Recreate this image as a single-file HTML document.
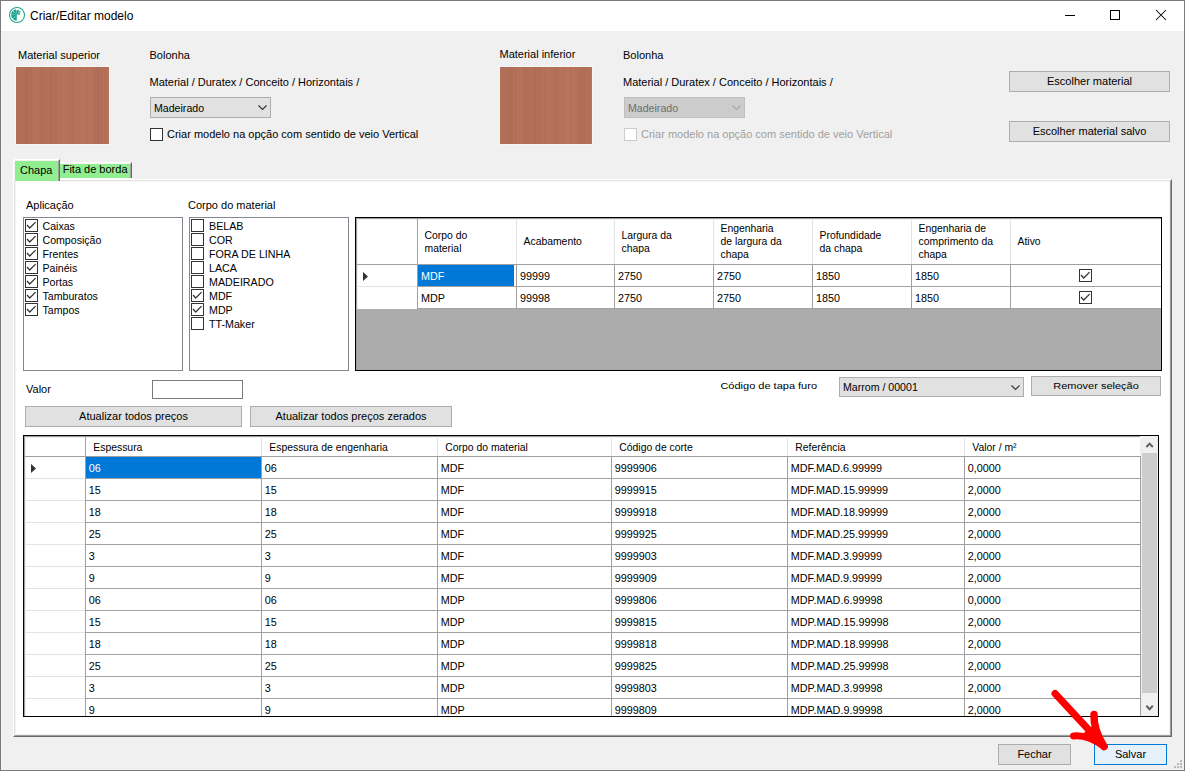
<!DOCTYPE html><html><head><meta charset="utf-8"><style>
html,body{margin:0;padding:0}
body{width:1185px;height:771px;overflow:hidden;position:relative;background:#f0f0f0;font-family:"Liberation Sans",sans-serif}
div,span,svg{position:absolute}
.t{white-space:pre}
</style></head><body>
<div style="left:0px;top:0px;width:1185px;height:771px;box-sizing:border-box;border:1px solid #7a7a7a"></div>
<div style="left:1px;top:1px;width:1183px;height:30px;background:#fff"></div>
<svg style="left:8px;top:6px" width="18" height="18" viewBox="0 0 18 18">
<circle cx="9" cy="9" r="7.5" fill="none" stroke="#1aa58e" stroke-width="1.05"/>
<path d="M8.9 8.8 L8.69 14.80 A6.0 6.0 0 0 1 4.89 13.26 Z M8.9 8.8 L4.62 12.79 A5.85 5.85 0 0 1 3.06 9.11 Z M8.9 8.8 L3.05 8.60 A5.85 5.85 0 0 1 4.48 4.96 Z M8.9 8.8 L5.01 4.77 A5.6 5.6 0 0 1 8.02 3.27 Z M8.9 8.8 L8.64 3.91 A4.9 4.9 0 0 1 11.28 4.51 Z M8.9 8.8 L11.65 4.87 A4.8 4.8 0 0 1 12.68 5.84 Z M8.9 8.8 L11.70 7.05 A3.3 3.3 0 0 1 12.18 8.40 Z" fill="#1aa58e"/>
</svg>
<span class="t" style="left:30px;top:10.24px;font-size:12px;line-height:12px;color:#000;">Criar/Editar modelo</span>
<div style="left:1065px;top:15px;width:10px;height:1px;background:#000"></div>
<div style="left:1110px;top:10px;width:10px;height:10px;box-sizing:border-box;border:1px solid #000"></div>
<svg style="left:1155px;top:9px" width="12" height="12"><path d="M1 1 L11 11 M11 1 L1 11" stroke="#000" stroke-width="1.05"/></svg>
<span class="t" style="left:18px;top:49.69px;font-size:11px;line-height:11px;color:#000;">Material superior</span>
<div style="left:16px;top:67px;width:93px;height:77px;background-color:#b4715a;background-image:linear-gradient(90deg,rgb(179,112,89) 0px 1px,rgb(177,110,88) 1px 2px,rgb(179,112,89) 2px 3px,rgb(176,110,88) 3px 4px,rgb(178,112,89) 4px 5px,rgb(178,111,89) 5px 6px,rgb(176,110,87) 6px 7px,rgb(177,111,88) 7px 8px,rgb(175,109,87) 8px 9px,rgb(177,110,88) 9px 10px,rgb(175,109,86) 10px 11px,rgb(174,108,86) 11px 12px,rgb(176,110,87) 12px 13px,rgb(180,113,90) 13px 14px,rgb(177,111,88) 14px 15px,rgb(176,110,88) 15px 16px,rgb(179,112,89) 16px 17px,rgb(182,115,92) 17px 18px,rgb(182,115,91) 18px 19px,rgb(180,113,90) 19px 20px,rgb(184,116,93) 20px 21px,rgb(179,112,89) 21px 22px,rgb(182,115,91) 22px 23px,rgb(180,113,90) 23px 24px,rgb(177,111,88) 24px 25px,rgb(176,110,87) 25px 26px,rgb(176,110,87) 26px 27px,rgb(180,113,90) 27px 28px,rgb(178,111,88) 28px 29px,rgb(179,112,89) 29px 30px,rgb(180,113,90) 30px 31px,rgb(179,113,90) 31px 32px,rgb(180,113,90) 32px 33px,rgb(177,111,88) 33px 34px,rgb(175,109,87) 34px 35px,rgb(175,109,86) 35px 36px,rgb(178,112,89) 36px 37px,rgb(178,112,89) 37px 38px,rgb(178,111,88) 38px 39px,rgb(179,112,89) 39px 40px,rgb(179,112,89) 40px 41px,rgb(178,112,89) 41px 42px,rgb(181,114,91) 42px 43px,rgb(182,115,91) 43px 44px,rgb(179,113,90) 44px 45px,rgb(180,113,90) 45px 46px,rgb(180,113,90) 46px 47px,rgb(183,115,92) 47px 48px,rgb(183,116,92) 48px 49px,rgb(180,113,90) 49px 50px,rgb(184,116,93) 50px 51px,rgb(180,113,90) 51px 52px,rgb(179,112,89) 52px 53px,rgb(181,114,91) 53px 54px,rgb(178,112,89) 54px 55px,rgb(179,112,89) 55px 56px,rgb(176,110,87) 56px 57px,rgb(179,112,89) 57px 58px,rgb(181,114,91) 58px 59px,rgb(181,114,91) 59px 60px,rgb(183,116,92) 60px 61px,rgb(181,114,90) 61px 62px,rgb(182,114,91) 62px 63px,rgb(182,114,91) 63px 64px,rgb(182,114,91) 64px 65px,rgb(181,114,90) 65px 66px,rgb(183,115,92) 66px 67px,rgb(185,117,93) 67px 68px,rgb(183,115,92) 68px 69px,rgb(183,115,92) 69px 70px,rgb(179,112,89) 70px 71px,rgb(181,113,90) 71px 72px,rgb(181,114,91) 72px 73px,rgb(184,116,93) 73px 74px,rgb(185,117,93) 74px 75px,rgb(181,114,91) 75px 76px,rgb(180,113,90) 76px 77px,rgb(181,114,91) 77px 78px,rgb(177,111,88) 78px 79px,rgb(178,112,89) 79px 80px,rgb(177,110,88) 80px 81px,rgb(175,109,87) 81px 82px,rgb(174,108,86) 82px 83px,rgb(178,112,89) 83px 84px,rgb(176,110,87) 84px 85px,rgb(176,110,87) 85px 86px,rgb(177,111,88) 86px 87px,rgb(181,114,91) 87px 88px,rgb(178,111,88) 88px 89px,rgb(178,112,89) 89px 90px,rgb(179,112,89) 90px 91px,rgb(182,115,92) 91px 92px,rgb(184,116,92) 92px 93px);box-shadow:0 0 0 1px #f4f7f9"></div>
<span class="t" style="left:149.5px;top:49.79px;font-size:11px;line-height:11px;color:#000;">Bolonha</span>
<span class="t" style="left:149.5px;top:77.09px;font-size:11px;line-height:11px;color:#000;">Material / Duratex / Conceito / Horizontais /</span>
<div style="left:150px;top:97px;width:121px;height:21px;box-sizing:border-box;border:1px solid #adadad;background:#e1e1e1"></div>
<span class="t" style="left:154px;top:102.93px;font-size:10.6px;line-height:10.6px;color:#000;">Madeirado</span>
<svg style="left:257.5px;top:105px" width="10" height="6"><path d="M0.5 0.5 L4.5 4.5 L8.5 0.5" stroke="#333" stroke-width="1.15" fill="none"/></svg>
<div style="left:150px;top:128px;width:13px;height:13px;box-sizing:border-box;border:1px solid #333;background:#fff"></div>
<span class="t" style="left:167px;top:128.69px;font-size:11px;line-height:11px;color:#000;">Criar modelo na opção com sentido de veio Vertical</span>
<span class="t" style="left:499.5px;top:49.09px;font-size:11px;line-height:11px;color:#000;">Material inferior</span>
<div style="left:500px;top:67px;width:92px;height:77px;background-color:#b4715a;background-image:linear-gradient(90deg,rgb(179,112,89) 0px 1px,rgb(177,110,88) 1px 2px,rgb(179,112,89) 2px 3px,rgb(176,110,88) 3px 4px,rgb(178,112,89) 4px 5px,rgb(178,111,89) 5px 6px,rgb(176,110,87) 6px 7px,rgb(177,111,88) 7px 8px,rgb(175,109,87) 8px 9px,rgb(177,110,88) 9px 10px,rgb(175,109,86) 10px 11px,rgb(174,108,86) 11px 12px,rgb(176,110,87) 12px 13px,rgb(180,113,90) 13px 14px,rgb(177,111,88) 14px 15px,rgb(176,110,88) 15px 16px,rgb(179,112,89) 16px 17px,rgb(182,115,92) 17px 18px,rgb(182,115,91) 18px 19px,rgb(180,113,90) 19px 20px,rgb(184,116,93) 20px 21px,rgb(179,112,89) 21px 22px,rgb(182,115,91) 22px 23px,rgb(180,113,90) 23px 24px,rgb(177,111,88) 24px 25px,rgb(176,110,87) 25px 26px,rgb(176,110,87) 26px 27px,rgb(180,113,90) 27px 28px,rgb(178,111,88) 28px 29px,rgb(179,112,89) 29px 30px,rgb(180,113,90) 30px 31px,rgb(179,113,90) 31px 32px,rgb(180,113,90) 32px 33px,rgb(177,111,88) 33px 34px,rgb(175,109,87) 34px 35px,rgb(175,109,86) 35px 36px,rgb(178,112,89) 36px 37px,rgb(178,112,89) 37px 38px,rgb(178,111,88) 38px 39px,rgb(179,112,89) 39px 40px,rgb(179,112,89) 40px 41px,rgb(178,112,89) 41px 42px,rgb(181,114,91) 42px 43px,rgb(182,115,91) 43px 44px,rgb(179,113,90) 44px 45px,rgb(180,113,90) 45px 46px,rgb(180,113,90) 46px 47px,rgb(183,115,92) 47px 48px,rgb(183,116,92) 48px 49px,rgb(180,113,90) 49px 50px,rgb(184,116,93) 50px 51px,rgb(180,113,90) 51px 52px,rgb(179,112,89) 52px 53px,rgb(181,114,91) 53px 54px,rgb(178,112,89) 54px 55px,rgb(179,112,89) 55px 56px,rgb(176,110,87) 56px 57px,rgb(179,112,89) 57px 58px,rgb(181,114,91) 58px 59px,rgb(181,114,91) 59px 60px,rgb(183,116,92) 60px 61px,rgb(181,114,90) 61px 62px,rgb(182,114,91) 62px 63px,rgb(182,114,91) 63px 64px,rgb(182,114,91) 64px 65px,rgb(181,114,90) 65px 66px,rgb(183,115,92) 66px 67px,rgb(185,117,93) 67px 68px,rgb(183,115,92) 68px 69px,rgb(183,115,92) 69px 70px,rgb(179,112,89) 70px 71px,rgb(181,113,90) 71px 72px,rgb(181,114,91) 72px 73px,rgb(184,116,93) 73px 74px,rgb(185,117,93) 74px 75px,rgb(181,114,91) 75px 76px,rgb(180,113,90) 76px 77px,rgb(181,114,91) 77px 78px,rgb(177,111,88) 78px 79px,rgb(178,112,89) 79px 80px,rgb(177,110,88) 80px 81px,rgb(175,109,87) 81px 82px,rgb(174,108,86) 82px 83px,rgb(178,112,89) 83px 84px,rgb(176,110,87) 84px 85px,rgb(176,110,87) 85px 86px,rgb(177,111,88) 86px 87px,rgb(181,114,91) 87px 88px,rgb(178,111,88) 88px 89px,rgb(178,112,89) 89px 90px,rgb(179,112,89) 90px 91px,rgb(182,115,92) 91px 92px,rgb(184,116,92) 92px 93px);box-shadow:0 0 0 1px #f4f7f9"></div>
<span class="t" style="left:623px;top:49.99px;font-size:11px;line-height:11px;color:#000;">Bolonha</span>
<span class="t" style="left:623px;top:77.19px;font-size:11px;line-height:11px;color:#000;">Material / Duratex / Conceito / Horizontais /</span>
<div style="left:624px;top:97px;width:121px;height:21px;box-sizing:border-box;border:1px solid #bfbfbf;background:#cccccc"></div>
<span class="t" style="left:628px;top:102.93px;font-size:10.6px;line-height:10.6px;color:#6d6d6d;">Madeirado</span>
<svg style="left:731.5px;top:105px" width="10" height="6"><path d="M0.5 0.5 L4.5 4.5 L8.5 0.5" stroke="#a8a8a8" stroke-width="1.15" fill="none"/></svg>
<div style="left:624px;top:128px;width:13px;height:13px;box-sizing:border-box;border:1px solid #cccccc;background:#fff"></div>
<span class="t" style="left:641px;top:128.69px;font-size:11px;line-height:11px;color:#a0a0a0;">Criar modelo na opção com sentido de veio Vertical</span>
<div style="left:1009px;top:71px;width:161px;height:21px;box-sizing:border-box;border:1px solid #adadad;background:#e1e1e1"></div>
<span class="t" style="left:1009px;width:161px;text-align:center;top:75.99px;font-size:11px;line-height:11px;color:#000;">Escolher material</span>
<div style="left:1009px;top:121px;width:161px;height:21px;box-sizing:border-box;border:1px solid #adadad;background:#e1e1e1"></div>
<span class="t" style="left:1009px;width:161px;text-align:center;top:125.99px;font-size:11px;line-height:11px;color:#000;">Escolher material salvo</span>
<div style="left:13px;top:179px;width:1159px;height:558px;box-sizing:border-box;background:#fff;border-left:1px solid #fff;border-top:1px solid #fff;border-right:1px solid #696969;border-bottom:1px solid #696969"></div>
<div style="left:14px;top:180px;width:1157px;height:556px;box-sizing:border-box;border-left:1px solid #e3e3e3;border-top:1px solid #e3e3e3;border-right:1px solid #a0a0a0;border-bottom:1px solid #a0a0a0"></div>
<div style="left:15px;top:181px;width:1155px;height:554px;box-sizing:border-box;border-left:1px solid #f0f0f0;border-top:1px solid #f7f7f7;border-right:1px solid #f0f0f0;border-bottom:1px solid #f0f0f0"></div>
<div style="left:13px;top:159px;width:47px;height:22px;box-sizing:border-box;background:#90ee90;border-left:1px solid #fff;border-top:1px solid #fff;border-right:1px solid #696969"></div>
<div style="left:14px;top:160px;width:45px;height:21px;box-sizing:border-box;border-left:1px solid #f5f1f5;border-top:1px solid #f5f1f5;border-right:1px solid #a0a0a0"></div>
<div style="left:13px;top:159px;width:1px;height:1px;background:#f0f0f0"></div>
<span class="t" style="left:20px;top:165.49px;font-size:11px;line-height:11px;color:#000;">Chapa</span>
<div style="left:60px;top:162px;width:72px;height:16px;box-sizing:border-box;background:#90ee90;border-top:1px solid #fff;border-right:1px solid #696969"></div>
<div style="left:60px;top:163px;width:71px;height:15px;box-sizing:border-box;border-top:1px solid #f5f1f5;border-right:1px solid #a0a0a0"></div>
<div style="left:60px;top:178px;width:72px;height:1px;background:#fff"></div>
<span class="t" style="left:62.7px;top:164.09px;font-size:11px;line-height:11px;color:#000;">Fita de borda</span>
<span class="t" style="left:26px;top:199.89px;font-size:11px;line-height:11px;color:#000;">Aplicação</span>
<div style="left:23px;top:217px;width:160px;height:154px;box-sizing:border-box;border:1px solid #828790;background:#fff"></div>
<div style="left:25px;top:219px;width:13px;height:13px;box-sizing:border-box;border:1px solid #333;background:#fff"></div>
<svg style="left:25px;top:219px" width="13" height="13"><path d="M2 6 L4.7 9 L10.6 3.1" stroke="#333" stroke-width="1.25" fill="none"/></svg>
<span class="t" style="left:42.5px;top:221.03px;font-size:10.6px;line-height:10.6px;color:#000;">Caixas</span>
<div style="left:25px;top:233px;width:13px;height:13px;box-sizing:border-box;border:1px solid #333;background:#fff"></div>
<svg style="left:25px;top:233px" width="13" height="13"><path d="M2 6 L4.7 9 L10.6 3.1" stroke="#333" stroke-width="1.25" fill="none"/></svg>
<span class="t" style="left:42.5px;top:235.03px;font-size:10.6px;line-height:10.6px;color:#000;">Composição</span>
<div style="left:25px;top:247px;width:13px;height:13px;box-sizing:border-box;border:1px solid #333;background:#fff"></div>
<svg style="left:25px;top:247px" width="13" height="13"><path d="M2 6 L4.7 9 L10.6 3.1" stroke="#333" stroke-width="1.25" fill="none"/></svg>
<span class="t" style="left:42.5px;top:249.03px;font-size:10.6px;line-height:10.6px;color:#000;">Frentes</span>
<div style="left:25px;top:261px;width:13px;height:13px;box-sizing:border-box;border:1px solid #333;background:#fff"></div>
<svg style="left:25px;top:261px" width="13" height="13"><path d="M2 6 L4.7 9 L10.6 3.1" stroke="#333" stroke-width="1.25" fill="none"/></svg>
<span class="t" style="left:42.5px;top:263.03px;font-size:10.6px;line-height:10.6px;color:#000;">Painéis</span>
<div style="left:25px;top:275px;width:13px;height:13px;box-sizing:border-box;border:1px solid #333;background:#fff"></div>
<svg style="left:25px;top:275px" width="13" height="13"><path d="M2 6 L4.7 9 L10.6 3.1" stroke="#333" stroke-width="1.25" fill="none"/></svg>
<span class="t" style="left:42.5px;top:277.03px;font-size:10.6px;line-height:10.6px;color:#000;">Portas</span>
<div style="left:25px;top:289px;width:13px;height:13px;box-sizing:border-box;border:1px solid #333;background:#fff"></div>
<svg style="left:25px;top:289px" width="13" height="13"><path d="M2 6 L4.7 9 L10.6 3.1" stroke="#333" stroke-width="1.25" fill="none"/></svg>
<span class="t" style="left:42.5px;top:291.03px;font-size:10.6px;line-height:10.6px;color:#000;">Tamburatos</span>
<div style="left:25px;top:303px;width:13px;height:13px;box-sizing:border-box;border:1px solid #333;background:#fff"></div>
<svg style="left:25px;top:303px" width="13" height="13"><path d="M2 6 L4.7 9 L10.6 3.1" stroke="#333" stroke-width="1.25" fill="none"/></svg>
<span class="t" style="left:42.5px;top:305.03px;font-size:10.6px;line-height:10.6px;color:#000;">Tampos</span>
<span class="t" style="left:188px;top:199.99px;font-size:11px;line-height:11px;color:#000;">Corpo do material</span>
<div style="left:189px;top:217px;width:160px;height:154px;box-sizing:border-box;border:1px solid #828790;background:#fff"></div>
<div style="left:191px;top:219px;width:13px;height:13px;box-sizing:border-box;border:1px solid #333;background:#fff"></div>
<span class="t" style="left:209px;top:220.94px;font-size:10.7px;line-height:10.7px;color:#000;">BELAB</span>
<div style="left:191px;top:233px;width:13px;height:13px;box-sizing:border-box;border:1px solid #333;background:#fff"></div>
<span class="t" style="left:209px;top:234.94px;font-size:10.7px;line-height:10.7px;color:#000;">COR</span>
<div style="left:191px;top:247px;width:13px;height:13px;box-sizing:border-box;border:1px solid #333;background:#fff"></div>
<span class="t" style="left:209px;top:248.94px;font-size:10.7px;line-height:10.7px;color:#000;">FORA DE LINHA</span>
<div style="left:191px;top:261px;width:13px;height:13px;box-sizing:border-box;border:1px solid #333;background:#fff"></div>
<span class="t" style="left:209px;top:262.94px;font-size:10.7px;line-height:10.7px;color:#000;">LACA</span>
<div style="left:191px;top:275px;width:13px;height:13px;box-sizing:border-box;border:1px solid #333;background:#fff"></div>
<span class="t" style="left:209px;top:276.94px;font-size:10.7px;line-height:10.7px;color:#000;">MADEIRADO</span>
<div style="left:191px;top:289px;width:13px;height:13px;box-sizing:border-box;border:1px solid #333;background:#fff"></div>
<svg style="left:191px;top:289px" width="13" height="13"><path d="M2 6 L4.7 9 L10.6 3.1" stroke="#333" stroke-width="1.25" fill="none"/></svg>
<span class="t" style="left:209px;top:290.94px;font-size:10.7px;line-height:10.7px;color:#000;">MDF</span>
<div style="left:191px;top:303px;width:13px;height:13px;box-sizing:border-box;border:1px solid #333;background:#fff"></div>
<svg style="left:191px;top:303px" width="13" height="13"><path d="M2 6 L4.7 9 L10.6 3.1" stroke="#333" stroke-width="1.25" fill="none"/></svg>
<span class="t" style="left:209px;top:304.94px;font-size:10.7px;line-height:10.7px;color:#000;">MDP</span>
<div style="left:191px;top:317px;width:13px;height:13px;box-sizing:border-box;border:1px solid #333;background:#fff"></div>
<span class="t" style="left:209px;top:318.94px;font-size:10.7px;line-height:10.7px;color:#000;">TT-Maker</span>
<div style="left:355px;top:217px;width:807px;height:154px;box-sizing:border-box;border:1px solid #000;background:#ababab"></div>
<div style="left:356px;top:218px;width:805px;height:91px;background:#fff"></div>
<div style="left:356px;top:218px;width:805px;height:1px;background:#a0a0a0"></div>
<div style="left:356px;top:218px;width:1px;height:152px;background:#a0a0a0"></div>
<div style="left:357px;top:219px;width:804px;height:1px;background:#f0f0f0"></div>
<div style="left:357px;top:219px;width:1px;height:89px;background:#f0f0f0"></div>
<div style="left:417px;top:218px;width:1px;height:46px;background:#a0a0a0"></div>
<div style="left:516px;top:220px;width:1px;height:44px;background:#e3e3e3"></div>
<div style="left:614px;top:220px;width:1px;height:44px;background:#e3e3e3"></div>
<div style="left:713px;top:220px;width:1px;height:44px;background:#e3e3e3"></div>
<div style="left:812px;top:220px;width:1px;height:44px;background:#e3e3e3"></div>
<div style="left:911px;top:220px;width:1px;height:44px;background:#e3e3e3"></div>
<div style="left:1010px;top:220px;width:1px;height:44px;background:#e3e3e3"></div>
<div style="left:356px;top:264px;width:805px;height:1px;background:#a0a0a0"></div>
<div style="left:417px;top:286px;width:744px;height:1px;background:#a0a0a0"></div>
<div style="left:417px;top:308px;width:744px;height:1px;background:#a0a0a0"></div>
<div style="left:358px;top:286px;width:59px;height:1px;background:#e3e3e3"></div>
<div style="left:417px;top:265px;width:1px;height:43px;background:#a0a0a0"></div>
<div style="left:516px;top:265px;width:1px;height:43px;background:#a0a0a0"></div>
<div style="left:614px;top:265px;width:1px;height:43px;background:#a0a0a0"></div>
<div style="left:713px;top:265px;width:1px;height:43px;background:#a0a0a0"></div>
<div style="left:812px;top:265px;width:1px;height:43px;background:#a0a0a0"></div>
<div style="left:911px;top:265px;width:1px;height:43px;background:#a0a0a0"></div>
<div style="left:1010px;top:265px;width:1px;height:43px;background:#a0a0a0"></div>
<div style="left:418px;top:265px;width:96px;height:21px;background:#0078d7"></div>
<span class="t" style="left:424.5px;top:230.90px;font-size:10.4px;line-height:10.4px;color:#000;">Corpo do</span>
<span class="t" style="left:424.5px;top:243.90px;font-size:10.4px;line-height:10.4px;color:#000;">material</span>
<span class="t" style="left:523.5px;top:237.40px;font-size:10.4px;line-height:10.4px;color:#000;">Acabamento</span>
<span class="t" style="left:621.5px;top:230.90px;font-size:10.4px;line-height:10.4px;color:#000;">Largura da</span>
<span class="t" style="left:621.5px;top:243.90px;font-size:10.4px;line-height:10.4px;color:#000;">chapa</span>
<span class="t" style="left:720.5px;top:224.40px;font-size:10.4px;line-height:10.4px;color:#000;">Engenharia</span>
<span class="t" style="left:720.5px;top:237.40px;font-size:10.4px;line-height:10.4px;color:#000;">de largura da</span>
<span class="t" style="left:720.5px;top:250.40px;font-size:10.4px;line-height:10.4px;color:#000;">chapa</span>
<span class="t" style="left:819.5px;top:230.90px;font-size:10.4px;line-height:10.4px;color:#000;">Profundidade</span>
<span class="t" style="left:819.5px;top:243.90px;font-size:10.4px;line-height:10.4px;color:#000;">da chapa</span>
<span class="t" style="left:918.5px;top:224.40px;font-size:10.4px;line-height:10.4px;color:#000;">Engenharia de</span>
<span class="t" style="left:918.5px;top:237.40px;font-size:10.4px;line-height:10.4px;color:#000;">comprimento da</span>
<span class="t" style="left:918.5px;top:250.40px;font-size:10.4px;line-height:10.4px;color:#000;">chapa</span>
<span class="t" style="left:1017.5px;top:237.40px;font-size:10.4px;line-height:10.4px;color:#000;">Ativo</span>
<span class="t" style="left:421px;top:271.36px;font-size:10.8px;line-height:10.8px;color:#fff;">MDF</span>
<span class="t" style="left:520px;top:271.36px;font-size:10.8px;line-height:10.8px;color:#000;">99999</span>
<span class="t" style="left:618px;top:271.36px;font-size:10.8px;line-height:10.8px;color:#000;">2750</span>
<span class="t" style="left:717px;top:271.36px;font-size:10.8px;line-height:10.8px;color:#000;">2750</span>
<span class="t" style="left:816px;top:271.36px;font-size:10.8px;line-height:10.8px;color:#000;">1850</span>
<span class="t" style="left:915px;top:271.36px;font-size:10.8px;line-height:10.8px;color:#000;">1850</span>
<div style="left:1079px;top:269px;width:13px;height:13px;box-sizing:border-box;border:1px solid #333;background:#fff"></div>
<svg style="left:1079px;top:269px" width="13" height="13"><path d="M2 6 L4.7 9 L10.6 3.1" stroke="#333" stroke-width="1.25" fill="none"/></svg>
<span class="t" style="left:421px;top:293.36px;font-size:10.8px;line-height:10.8px;color:#000;">MDP</span>
<span class="t" style="left:520px;top:293.36px;font-size:10.8px;line-height:10.8px;color:#000;">99998</span>
<span class="t" style="left:618px;top:293.36px;font-size:10.8px;line-height:10.8px;color:#000;">2750</span>
<span class="t" style="left:717px;top:293.36px;font-size:10.8px;line-height:10.8px;color:#000;">2750</span>
<span class="t" style="left:816px;top:293.36px;font-size:10.8px;line-height:10.8px;color:#000;">1850</span>
<span class="t" style="left:915px;top:293.36px;font-size:10.8px;line-height:10.8px;color:#000;">1850</span>
<div style="left:1079px;top:291px;width:13px;height:13px;box-sizing:border-box;border:1px solid #333;background:#fff"></div>
<svg style="left:1079px;top:291px" width="13" height="13"><path d="M2 6 L4.7 9 L10.6 3.1" stroke="#333" stroke-width="1.25" fill="none"/></svg>
<svg style="left:363px;top:272px" width="6" height="10"><path d="M0 0 L5 4.5 L0 9 Z" fill="#333"/></svg>
<span class="t" style="left:26px;top:384.29px;font-size:11px;line-height:11px;color:#000;">Valor</span>
<div style="left:152px;top:380px;width:91px;height:19px;box-sizing:border-box;border:1px solid #7a7a7a;background:#fff"></div>
<div style="left:25px;top:406px;width:217px;height:21px;box-sizing:border-box;border:1px solid #adadad;background:#e1e1e1"></div>
<span class="t" style="left:25px;width:217px;text-align:center;top:410.99px;font-size:11px;line-height:11px;color:#000;">Atualizar todos preços</span>
<div style="left:250px;top:406px;width:202px;height:21px;box-sizing:border-box;border:1px solid #adadad;background:#e1e1e1"></div>
<span class="t" style="left:250px;width:202px;text-align:center;top:410.99px;font-size:11px;line-height:11px;color:#000;">Atualizar todos preços zerados</span>
<span class="t" style="left:720.4px;top:379.99px;font-size:11px;line-height:11px;color:#000;transform:scaleY(0.82);transform-origin:0 9.3px">Código de tapa furo</span>
<div style="left:839px;top:377px;width:185px;height:20px;box-sizing:border-box;border:1px solid #adadad;background:#e1e1e1"></div>
<span class="t" style="left:843px;top:382.13px;font-size:10.6px;line-height:10.6px;color:#000;">Marrom / 00001</span>
<svg style="left:1010.5px;top:385px" width="10" height="6"><path d="M0.5 0.5 L4.5 4.5 L8.5 0.5" stroke="#333" stroke-width="1.15" fill="none"/></svg>
<div style="left:1031px;top:376px;width:130px;height:20px;box-sizing:border-box;border:1px solid #adadad;background:#e1e1e1"></div>
<span class="t" style="left:1031px;width:130px;text-align:center;top:380.29px;font-size:11px;line-height:11px;color:#000;transform:scaleY(0.86);transform-origin:0 9.3px">Remover seleção</span>
<div style="left:23px;top:435px;width:1136px;height:282px;box-sizing:border-box;border:1px solid #000;background:#fff"></div>
<div style="left:24px;top:436px;width:1116px;height:1px;background:#a0a0a0"></div>
<div style="left:24px;top:436px;width:1px;height:280px;background:#a0a0a0"></div>
<div style="left:25px;top:437px;width:1115px;height:1px;background:#f0f0f0"></div>
<div style="left:25px;top:437px;width:1px;height:279px;background:#f0f0f0"></div>
<div style="left:85px;top:436px;width:1px;height:20px;background:#a0a0a0"></div>
<div style="left:261px;top:438px;width:1px;height:18px;background:#e3e3e3"></div>
<div style="left:437px;top:438px;width:1px;height:18px;background:#e3e3e3"></div>
<div style="left:611px;top:438px;width:1px;height:18px;background:#e3e3e3"></div>
<div style="left:787px;top:438px;width:1px;height:18px;background:#e3e3e3"></div>
<div style="left:964px;top:438px;width:1px;height:18px;background:#e3e3e3"></div>
<div style="left:24px;top:456px;width:1116px;height:1px;background:#a0a0a0"></div>
<div style="left:85px;top:478px;width:1055px;height:1px;background:#a0a0a0"></div>
<div style="left:26px;top:478px;width:59px;height:1px;background:#e3e3e3"></div>
<div style="left:85px;top:500px;width:1055px;height:1px;background:#a0a0a0"></div>
<div style="left:26px;top:500px;width:59px;height:1px;background:#e3e3e3"></div>
<div style="left:85px;top:522px;width:1055px;height:1px;background:#a0a0a0"></div>
<div style="left:26px;top:522px;width:59px;height:1px;background:#e3e3e3"></div>
<div style="left:85px;top:544px;width:1055px;height:1px;background:#a0a0a0"></div>
<div style="left:26px;top:544px;width:59px;height:1px;background:#e3e3e3"></div>
<div style="left:85px;top:566px;width:1055px;height:1px;background:#a0a0a0"></div>
<div style="left:26px;top:566px;width:59px;height:1px;background:#e3e3e3"></div>
<div style="left:85px;top:588px;width:1055px;height:1px;background:#a0a0a0"></div>
<div style="left:26px;top:588px;width:59px;height:1px;background:#e3e3e3"></div>
<div style="left:85px;top:610px;width:1055px;height:1px;background:#a0a0a0"></div>
<div style="left:26px;top:610px;width:59px;height:1px;background:#e3e3e3"></div>
<div style="left:85px;top:632px;width:1055px;height:1px;background:#a0a0a0"></div>
<div style="left:26px;top:632px;width:59px;height:1px;background:#e3e3e3"></div>
<div style="left:85px;top:654px;width:1055px;height:1px;background:#a0a0a0"></div>
<div style="left:26px;top:654px;width:59px;height:1px;background:#e3e3e3"></div>
<div style="left:85px;top:676px;width:1055px;height:1px;background:#a0a0a0"></div>
<div style="left:26px;top:676px;width:59px;height:1px;background:#e3e3e3"></div>
<div style="left:85px;top:698px;width:1055px;height:1px;background:#a0a0a0"></div>
<div style="left:26px;top:698px;width:59px;height:1px;background:#e3e3e3"></div>
<div style="left:85px;top:457px;width:1px;height:259px;background:#a0a0a0"></div>
<div style="left:261px;top:457px;width:1px;height:259px;background:#a0a0a0"></div>
<div style="left:437px;top:457px;width:1px;height:259px;background:#a0a0a0"></div>
<div style="left:611px;top:457px;width:1px;height:259px;background:#a0a0a0"></div>
<div style="left:787px;top:457px;width:1px;height:259px;background:#a0a0a0"></div>
<div style="left:964px;top:457px;width:1px;height:259px;background:#a0a0a0"></div>
<div style="left:1140px;top:438px;width:1px;height:18px;background:#f0f0f0"></div>
<div style="left:1140px;top:456px;width:1px;height:260px;background:#a0a0a0"></div>
<div style="left:86px;top:457px;width:175px;height:21px;background:#0078d7"></div>
<span class="t" style="left:93.3px;top:442.90px;font-size:10.4px;line-height:10.4px;color:#000;">Espessura</span>
<span class="t" style="left:269.3px;top:442.90px;font-size:10.4px;line-height:10.4px;color:#000;">Espessura de engenharia</span>
<span class="t" style="left:445.3px;top:442.90px;font-size:10.4px;line-height:10.4px;color:#000;">Corpo do material</span>
<span class="t" style="left:619.3px;top:442.90px;font-size:10.4px;line-height:10.4px;color:#000;">Código de corte</span>
<span class="t" style="left:795.3px;top:442.90px;font-size:10.4px;line-height:10.4px;color:#000;">Referência</span>
<span class="t" style="left:972.3px;top:442.90px;font-size:10.4px;line-height:10.4px;color:#000;">Valor / m²</span>
<span class="t" style="left:88.8px;top:463.06px;font-size:10.8px;line-height:10.8px;color:#fff;">06</span>
<span class="t" style="left:264.8px;top:463.06px;font-size:10.8px;line-height:10.8px;color:#000;">06</span>
<span class="t" style="left:440.8px;top:463.06px;font-size:10.8px;line-height:10.8px;color:#000;">MDF</span>
<span class="t" style="left:614.8px;top:463.06px;font-size:10.8px;line-height:10.8px;color:#000;">9999906</span>
<span class="t" style="left:790.8px;top:463.06px;font-size:10.8px;line-height:10.8px;color:#000;">MDF.MAD.6.99999</span>
<span class="t" style="left:967.8px;top:463.06px;font-size:10.8px;line-height:10.8px;color:#000;">0,0000</span>
<span class="t" style="left:88.8px;top:485.06px;font-size:10.8px;line-height:10.8px;color:#000;">15</span>
<span class="t" style="left:264.8px;top:485.06px;font-size:10.8px;line-height:10.8px;color:#000;">15</span>
<span class="t" style="left:440.8px;top:485.06px;font-size:10.8px;line-height:10.8px;color:#000;">MDF</span>
<span class="t" style="left:614.8px;top:485.06px;font-size:10.8px;line-height:10.8px;color:#000;">9999915</span>
<span class="t" style="left:790.8px;top:485.06px;font-size:10.8px;line-height:10.8px;color:#000;">MDF.MAD.15.99999</span>
<span class="t" style="left:967.8px;top:485.06px;font-size:10.8px;line-height:10.8px;color:#000;">2,0000</span>
<span class="t" style="left:88.8px;top:507.06px;font-size:10.8px;line-height:10.8px;color:#000;">18</span>
<span class="t" style="left:264.8px;top:507.06px;font-size:10.8px;line-height:10.8px;color:#000;">18</span>
<span class="t" style="left:440.8px;top:507.06px;font-size:10.8px;line-height:10.8px;color:#000;">MDF</span>
<span class="t" style="left:614.8px;top:507.06px;font-size:10.8px;line-height:10.8px;color:#000;">9999918</span>
<span class="t" style="left:790.8px;top:507.06px;font-size:10.8px;line-height:10.8px;color:#000;">MDF.MAD.18.99999</span>
<span class="t" style="left:967.8px;top:507.06px;font-size:10.8px;line-height:10.8px;color:#000;">2,0000</span>
<span class="t" style="left:88.8px;top:529.06px;font-size:10.8px;line-height:10.8px;color:#000;">25</span>
<span class="t" style="left:264.8px;top:529.06px;font-size:10.8px;line-height:10.8px;color:#000;">25</span>
<span class="t" style="left:440.8px;top:529.06px;font-size:10.8px;line-height:10.8px;color:#000;">MDF</span>
<span class="t" style="left:614.8px;top:529.06px;font-size:10.8px;line-height:10.8px;color:#000;">9999925</span>
<span class="t" style="left:790.8px;top:529.06px;font-size:10.8px;line-height:10.8px;color:#000;">MDF.MAD.25.99999</span>
<span class="t" style="left:967.8px;top:529.06px;font-size:10.8px;line-height:10.8px;color:#000;">2,0000</span>
<span class="t" style="left:88.8px;top:551.06px;font-size:10.8px;line-height:10.8px;color:#000;">3</span>
<span class="t" style="left:264.8px;top:551.06px;font-size:10.8px;line-height:10.8px;color:#000;">3</span>
<span class="t" style="left:440.8px;top:551.06px;font-size:10.8px;line-height:10.8px;color:#000;">MDF</span>
<span class="t" style="left:614.8px;top:551.06px;font-size:10.8px;line-height:10.8px;color:#000;">9999903</span>
<span class="t" style="left:790.8px;top:551.06px;font-size:10.8px;line-height:10.8px;color:#000;">MDF.MAD.3.99999</span>
<span class="t" style="left:967.8px;top:551.06px;font-size:10.8px;line-height:10.8px;color:#000;">2,0000</span>
<span class="t" style="left:88.8px;top:573.06px;font-size:10.8px;line-height:10.8px;color:#000;">9</span>
<span class="t" style="left:264.8px;top:573.06px;font-size:10.8px;line-height:10.8px;color:#000;">9</span>
<span class="t" style="left:440.8px;top:573.06px;font-size:10.8px;line-height:10.8px;color:#000;">MDF</span>
<span class="t" style="left:614.8px;top:573.06px;font-size:10.8px;line-height:10.8px;color:#000;">9999909</span>
<span class="t" style="left:790.8px;top:573.06px;font-size:10.8px;line-height:10.8px;color:#000;">MDF.MAD.9.99999</span>
<span class="t" style="left:967.8px;top:573.06px;font-size:10.8px;line-height:10.8px;color:#000;">2,0000</span>
<span class="t" style="left:88.8px;top:595.06px;font-size:10.8px;line-height:10.8px;color:#000;">06</span>
<span class="t" style="left:264.8px;top:595.06px;font-size:10.8px;line-height:10.8px;color:#000;">06</span>
<span class="t" style="left:440.8px;top:595.06px;font-size:10.8px;line-height:10.8px;color:#000;">MDP</span>
<span class="t" style="left:614.8px;top:595.06px;font-size:10.8px;line-height:10.8px;color:#000;">9999806</span>
<span class="t" style="left:790.8px;top:595.06px;font-size:10.8px;line-height:10.8px;color:#000;">MDP.MAD.6.99998</span>
<span class="t" style="left:967.8px;top:595.06px;font-size:10.8px;line-height:10.8px;color:#000;">0,0000</span>
<span class="t" style="left:88.8px;top:617.06px;font-size:10.8px;line-height:10.8px;color:#000;">15</span>
<span class="t" style="left:264.8px;top:617.06px;font-size:10.8px;line-height:10.8px;color:#000;">15</span>
<span class="t" style="left:440.8px;top:617.06px;font-size:10.8px;line-height:10.8px;color:#000;">MDP</span>
<span class="t" style="left:614.8px;top:617.06px;font-size:10.8px;line-height:10.8px;color:#000;">9999815</span>
<span class="t" style="left:790.8px;top:617.06px;font-size:10.8px;line-height:10.8px;color:#000;">MDP.MAD.15.99998</span>
<span class="t" style="left:967.8px;top:617.06px;font-size:10.8px;line-height:10.8px;color:#000;">2,0000</span>
<span class="t" style="left:88.8px;top:639.06px;font-size:10.8px;line-height:10.8px;color:#000;">18</span>
<span class="t" style="left:264.8px;top:639.06px;font-size:10.8px;line-height:10.8px;color:#000;">18</span>
<span class="t" style="left:440.8px;top:639.06px;font-size:10.8px;line-height:10.8px;color:#000;">MDP</span>
<span class="t" style="left:614.8px;top:639.06px;font-size:10.8px;line-height:10.8px;color:#000;">9999818</span>
<span class="t" style="left:790.8px;top:639.06px;font-size:10.8px;line-height:10.8px;color:#000;">MDP.MAD.18.99998</span>
<span class="t" style="left:967.8px;top:639.06px;font-size:10.8px;line-height:10.8px;color:#000;">2,0000</span>
<span class="t" style="left:88.8px;top:661.06px;font-size:10.8px;line-height:10.8px;color:#000;">25</span>
<span class="t" style="left:264.8px;top:661.06px;font-size:10.8px;line-height:10.8px;color:#000;">25</span>
<span class="t" style="left:440.8px;top:661.06px;font-size:10.8px;line-height:10.8px;color:#000;">MDP</span>
<span class="t" style="left:614.8px;top:661.06px;font-size:10.8px;line-height:10.8px;color:#000;">9999825</span>
<span class="t" style="left:790.8px;top:661.06px;font-size:10.8px;line-height:10.8px;color:#000;">MDP.MAD.25.99998</span>
<span class="t" style="left:967.8px;top:661.06px;font-size:10.8px;line-height:10.8px;color:#000;">2,0000</span>
<span class="t" style="left:88.8px;top:683.06px;font-size:10.8px;line-height:10.8px;color:#000;">3</span>
<span class="t" style="left:264.8px;top:683.06px;font-size:10.8px;line-height:10.8px;color:#000;">3</span>
<span class="t" style="left:440.8px;top:683.06px;font-size:10.8px;line-height:10.8px;color:#000;">MDP</span>
<span class="t" style="left:614.8px;top:683.06px;font-size:10.8px;line-height:10.8px;color:#000;">9999803</span>
<span class="t" style="left:790.8px;top:683.06px;font-size:10.8px;line-height:10.8px;color:#000;">MDP.MAD.3.99998</span>
<span class="t" style="left:967.8px;top:683.06px;font-size:10.8px;line-height:10.8px;color:#000;">2,0000</span>
<span class="t" style="left:88.8px;top:705.06px;font-size:10.8px;line-height:10.8px;color:#000;">9</span>
<span class="t" style="left:264.8px;top:705.06px;font-size:10.8px;line-height:10.8px;color:#000;">9</span>
<span class="t" style="left:440.8px;top:705.06px;font-size:10.8px;line-height:10.8px;color:#000;">MDP</span>
<span class="t" style="left:614.8px;top:705.06px;font-size:10.8px;line-height:10.8px;color:#000;">9999809</span>
<span class="t" style="left:790.8px;top:705.06px;font-size:10.8px;line-height:10.8px;color:#000;">MDP.MAD.9.99998</span>
<span class="t" style="left:967.8px;top:705.06px;font-size:10.8px;line-height:10.8px;color:#000;">2,0000</span>
<svg style="left:31px;top:464px" width="6" height="10"><path d="M0 0 L5 4.5 L0 9 Z" fill="#333"/></svg>
<div style="left:1141px;top:436px;width:17px;height:280px;background:#f0f0f0"></div>
<div style="left:1142px;top:453px;width:15px;height:240px;background:#cdcdcd"></div>
<svg style="left:1145px;top:441px" width="10" height="8"><path d="M1.4 6 L4.6 2.6 L7.8 6" stroke="#606060" stroke-width="2" fill="none"/></svg>
<svg style="left:1145px;top:704px" width="10" height="8"><path d="M1.4 1.8 L4.6 5.2 L7.8 1.8" stroke="#606060" stroke-width="2" fill="none"/></svg>
<div style="left:998px;top:744px;width:73px;height:21px;box-sizing:border-box;border:1px solid #adadad;background:#e1e1e1"></div>
<span class="t" style="left:998px;width:73px;text-align:center;top:748.99px;font-size:11px;line-height:11px;color:#000;">Fechar</span>
<div style="left:1094px;top:744px;width:73px;height:21px;box-sizing:border-box;border:1px solid #0078d7;background:#e5f1fb"></div>
<span class="t" style="left:1094px;width:73px;text-align:center;top:748.99px;font-size:11px;line-height:11px;color:#000;">Salvar</span>
<div style="left:1180px;top:760px;width:2px;height:2px;background:#b8b8b8"></div>
<div style="left:1177px;top:763px;width:2px;height:2px;background:#b8b8b8"></div>
<div style="left:1180px;top:763px;width:2px;height:2px;background:#b8b8b8"></div>
<div style="left:1174px;top:766px;width:2px;height:2px;background:#b8b8b8"></div>
<div style="left:1177px;top:766px;width:2px;height:2px;background:#b8b8b8"></div>
<div style="left:1180px;top:766px;width:2px;height:2px;background:#b8b8b8"></div>
<svg style="left:1040px;top:680px" width="80" height="80"><path d="M15 13.5 L61 63" stroke="#ff0000" stroke-width="7" stroke-linecap="round" fill="none"/><path d="M33.5 56 Q48 54.5 64 66.5" stroke="#ff0000" stroke-width="7" stroke-linecap="round" fill="none"/><path d="M54 34.5 Q53.5 50 64 66.5" stroke="#ff0000" stroke-width="7.5" stroke-linecap="round" fill="none"/><path d="M40 56 L64 67 L55 44 Z" fill="#ff0000"/></svg>
</body></html>
